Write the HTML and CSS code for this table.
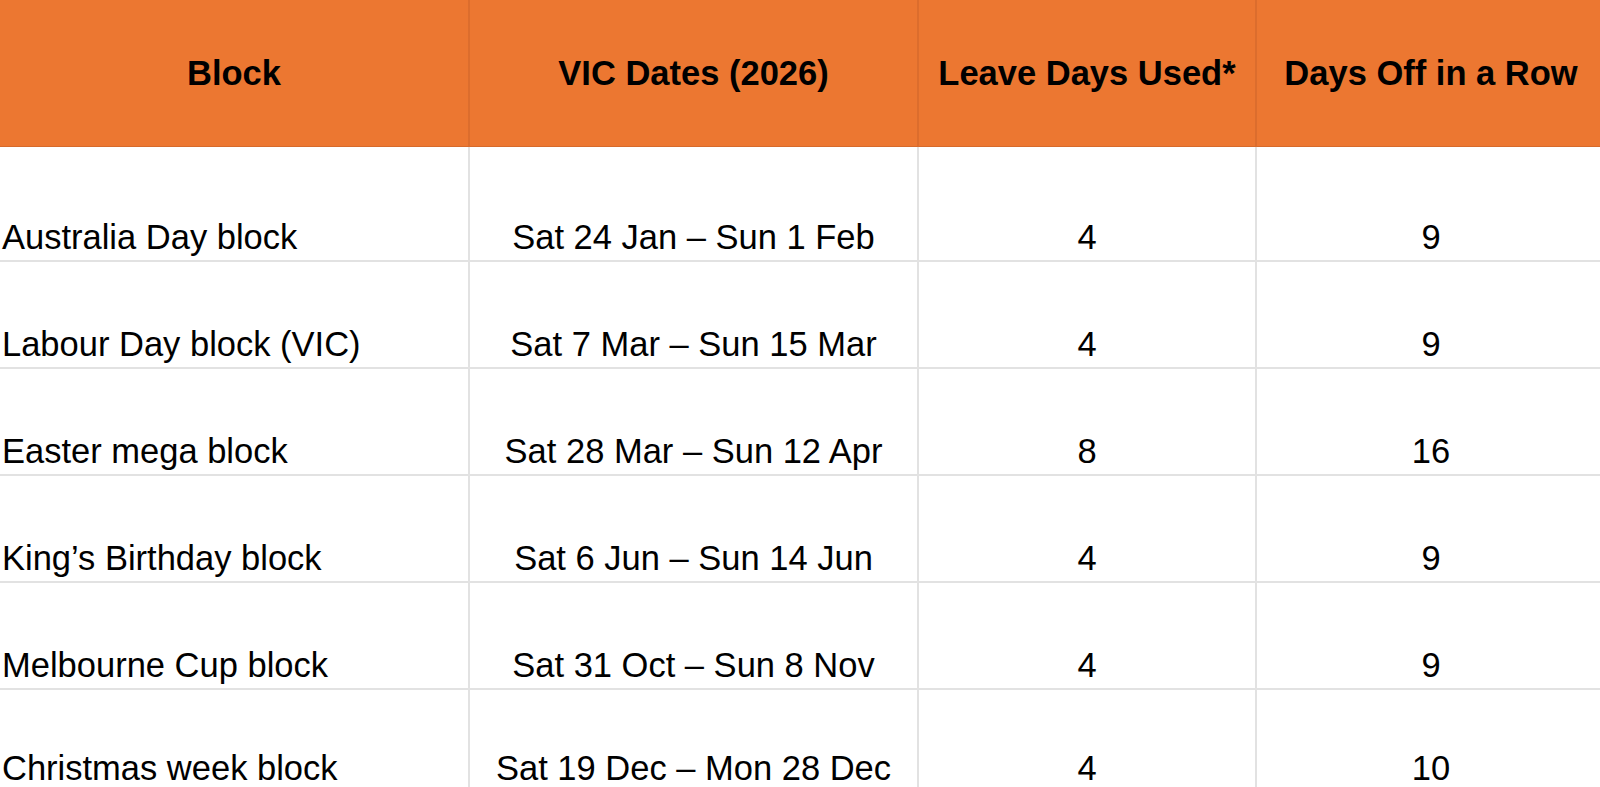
FILE: index.html
```html
<!DOCTYPE html>
<html lang="en">
<head>
<meta charset="utf-8">
<title>VIC 2026 Leave Blocks</title>
<link rel="stylesheet" href="styles.css">
</head>
<body>
<div class="sheet">
  <div class="cell head">Block</div>
  <div class="cell head">VIC Dates (2026)</div>
  <div class="cell head">Leave Days Used*</div>
  <div class="cell head">Days Off in a Row</div>

  <div class="cell name">Australia Day block</div>
  <div class="cell mid">Sat 24 Jan – Sun 1 Feb</div>
  <div class="cell mid">4</div>
  <div class="cell mid">9</div>

  <div class="cell name">Labour Day block (VIC)</div>
  <div class="cell mid">Sat 7 Mar – Sun 15 Mar</div>
  <div class="cell mid">4</div>
  <div class="cell mid">9</div>

  <div class="cell name">Easter mega block</div>
  <div class="cell mid">Sat 28 Mar – Sun 12 Apr</div>
  <div class="cell mid">8</div>
  <div class="cell mid">16</div>

  <div class="cell name">King’s Birthday block</div>
  <div class="cell mid">Sat 6 Jun – Sun 14 Jun</div>
  <div class="cell mid">4</div>
  <div class="cell mid">9</div>

  <div class="cell name">Melbourne Cup block</div>
  <div class="cell mid">Sat 31 Oct – Sun 8 Nov</div>
  <div class="cell mid">4</div>
  <div class="cell mid">9</div>

  <div class="cell name">Christmas week block</div>
  <div class="cell mid">Sat 19 Dec – Mon 28 Dec</div>
  <div class="cell mid">4</div>
  <div class="cell mid">10</div>
</div>
</body>
</html>
```

FILE: styles.css
```css
html, body {
  margin: 0;
  padding: 0;
  background: #ffffff;
  overflow: hidden;
}

body {
  width: 1600px;
  height: 787px;
  font-family: "Liberation Sans", Arial, sans-serif;
  color: #000000;
}

.sheet {
  display: grid;
  grid-template-columns: 470px 449px 338px 350px;
  grid-template-rows: 147px 115px 107px 107px 107px 107px 103px;
  width: 1607px;
}

.cell {
  display: flex;
  box-sizing: border-box;
  font-size: 34.5px;
  line-height: 1.15;
  white-space: nowrap;
  border-right: 2px solid #e2e2e2;
  border-bottom: 2px solid #e2e2e2;
}

.head {
  background: #ec7731;
  font-weight: bold;
  align-items: center;
  justify-content: center;
  padding-top: 2px;
  border-right: 2px solid #dc6d2d;
  border-bottom: 1px solid #d66a2b;
}

.name {
  align-items: flex-end;
  justify-content: flex-start;
  padding: 0 0 2px 2px;
}

.mid {
  align-items: flex-end;
  justify-content: center;
  padding: 0 0 2px 0;
}
```
